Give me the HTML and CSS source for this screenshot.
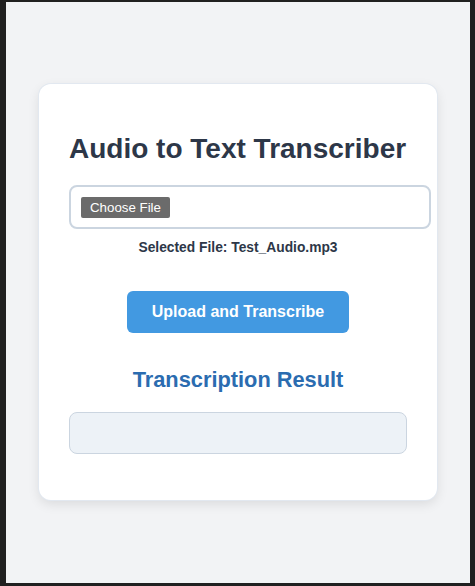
FILE: index.html
```html
<!DOCTYPE html>
<html lang="en">
<head>
<meta charset="utf-8">
<title>Audio to Text Transcriber</title>
<link rel="stylesheet" href="styles.css">
</head>
<body>
<div class="screen">
  <main class="card">
    <h1 class="title">Audio to Text Transcriber</h1>
    <div class="file-input">
      <span class="file-btn">Choose File</span>
    </div>
    <p class="selected">Selected File: Test_Audio.mp3</p>
    <div class="actions">
      <button class="upload" type="button">Upload and Transcribe</button>
    </div>
    <h2 class="result-title">Transcription Result</h2>
    <div class="result-box"></div>
  </main>
</div>
</body>
</html>
```

FILE: styles.css
```css
html {
  background: #202020;
}
body {
  margin: 0;
  font-family: "Liberation Sans", Arial, sans-serif;
}
.screen {
  margin: 2px 5px 3px 6px;
  height: 581px;
  box-sizing: border-box;
  padding-top: 82px;
  background: #f2f3f5;
}
.card {
  width: 338px;
  margin: 0 auto;
  padding: 30px;
  background: #ffffff;
  border-radius: 12px;
  box-shadow: 0 0 0 1px #e2e8f0, 0 4px 12px rgba(0, 0, 0, 0.1);
}
.title {
  margin: 19px 0 20px;
  font-size: 28px;
  line-height: 32px;
  font-weight: bold;
  color: #2d3748;
}
.file-input {
  width: 338px;
  padding: 10px;
  border: 2px solid #cbd5e0;
  border-radius: 8px;
  height: 20px;
  display: flex;
  align-items: flex-start;
}
.file-btn {
  display: inline-block;
  height: 21px;
  box-sizing: border-box;
  padding: 3px 9px;
  background: #6b6b6b;
  color: #ffffff;
  font-size: 13.3px;
  line-height: 15px;
  border-radius: 2px;
}
.selected {
  margin: 11px 0 0;
  text-align: center;
  font-size: 13.8px;
  line-height: 16px;
  font-weight: bold;
  color: #2d3748;
}
.actions {
  display: flex;
  justify-content: center;
  margin-top: 35px;
}
.upload {
  border: none;
  padding: 12px 25px;
  background: #4299e1;
  color: #ffffff;
  font-family: "Liberation Sans", Arial, sans-serif;
  font-size: 16px;
  line-height: 18px;
  font-weight: bold;
  border-radius: 6px;
}
.result-title {
  margin: 34px 0 20px;
  text-align: center;
  font-size: 21.8px;
  line-height: 25px;
  font-weight: bold;
  color: #2b6cb0;
}
.result-box {
  height: 40px;
  margin-bottom: 16px;
  background: #edf2f7;
  border: 1px solid #cbd5e0;
  border-radius: 8px;
}
```
